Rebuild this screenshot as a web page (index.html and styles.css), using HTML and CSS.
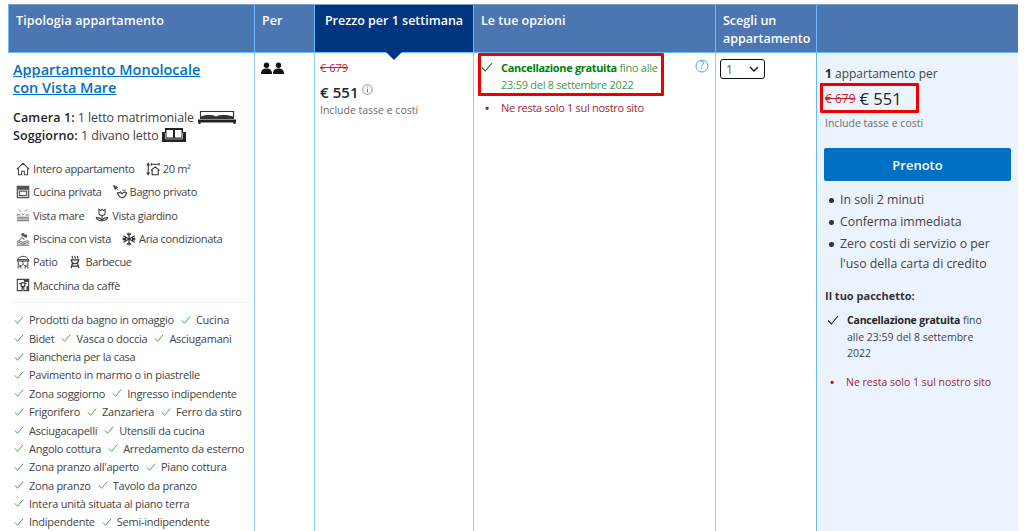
FILE: index.html
```html
<!DOCTYPE html>
<html lang="it">
<head>
<meta charset="utf-8">
<title>Appartamento Monolocale</title>
<link rel="stylesheet" href="styles.css">
</head>
<body>
<svg class="defs" width="0" height="0" aria-hidden="true">
  <symbol id="chk" viewBox="0 0 12 12"><path d="M1 6.500 4.300 10 11 2" fill="none" stroke="currentColor" stroke-width="1.100"/></symbol>
</svg>
<main class="table">
  <div class="th th-first">Tipologia appartamento</div>
  <div class="th th-per">Per</div>
  <div class="th th-price">Prezzo per 1 settimana</div>
  <div class="th">Le tue opzioni</div>
  <div class="th">Scegli un appartamento</div>
  <div class="th th-last"></div>

  <section class="td td-type">
    <a class="room-name" href="#">Appartamento Monolocale con Vista Mare</a>
    <div class="beds">
      <div><b>Camera 1:</b> 1 letto matrimoniale
        <svg class="bed" width="40" height="14" viewBox="0 0 40 14"><path d="M3.500 7V1.500h33V7" fill="none" stroke="#333" stroke-width="1.200"/><path d="M3 7c5-2.500 12-2.500 16-.5 4-2 12-2 18 .5v2H3z" fill="#333"/><path d="M1 9.500h38v3H1z" fill="#222"/><path d="M1.500 12h2v2h-2zM36.500 12h2v2h-2z" fill="#222"/></svg>
      </div>
      <div><b>Soggiorno:</b> 1 divano letto
        <svg class="sofa" width="24" height="14" viewBox="0 0 24 14"><path d="M3 0h18v4h3v10H0V4h3z" fill="#222"/><path d="M4.500 2h6.500v7.500H4.500zM13 2h6.500v7.500H13z" fill="#fff"/><path d="M2.500 5.500h1v5.500h17v-5.500h1" fill="none" stroke="#eee" stroke-width=".6"/></svg>
      </div>
    </div>
    <div class="facilities">
      <div class="f-row">
        <span class="f"><svg class="fi" viewBox="0 0 16 16"><path d="M.8 8.500 8 1.500l7.200 7M2.800 7v7.500h3.700v-4h3v4h3.700V7" fill="none" stroke="#444" stroke-width="1.200"/></svg>Intero appartamento</span>
        <span class="f"><svg class="fi" viewBox="0 0 16 16"><path d="M6 2.500h9M2.500 2v12M1 4l1.500-2.500L4 4M1 12l1.500 2.500L4 12M6 1v3M15 1v3" fill="none" stroke="#333" stroke-width="1.200"/><path d="M5.500 9.500l5-4 5 4M7 8.500v6h7v-6" fill="none" stroke="#333" stroke-width="1.200"/></svg>20 m²</span>
      </div>
      <div class="f-row">
        <span class="f"><svg class="fi" viewBox="0 0 16 16"><path d="M1.500 1.500h13v13h-13zM3.800 7h8.400v5.200H3.800z" fill="none" stroke="#555" stroke-width="1.400"/><path d="M1.500 1.500h13v4h-13z" fill="#555"/></svg>Cucina privata</span>
        <span class="f"><svg class="fi" viewBox="0 0 16 16"><path d="M.5 .5 5 2.500 2.500 5zM4 4l2 1.500" fill="#444" stroke="#444"/><path d="M5 9c1 3 2.500 5 5 5.500 3 0 5-3 5.500-6-2-.8-4 0-5 1.500C9.500 9 7.500 8.500 5 9z" fill="none" stroke="#444" stroke-width="1.300"/><path d="M8 7l1 1M11 5l1 2M14 5l-1 2" stroke="#444"/></svg>Bagno privato</span>
      </div>
      <div class="f-row">
        <span class="f"><svg class="fi" viewBox="0 0 16 16"><path d="M1 10.500h14M1 12.500h14M1 14.500h14M3.500 2l2 2M12.500 2l-2 2M6.500 6.500c1 1 2 1 3 0M1 8.500c1.500-1 3-1 4 0M11 8.500c1-1 2.500-1 4 0" fill="none" stroke="#555"/></svg>Vista mare</span>
        <span class="f"><svg class="fi" viewBox="0 0 16 16"><path d="M4.500 1.500l2 1.500L8 1.500 9.500 3l2-1.500V6c0 1.500-1.500 2.500-3.500 2.500S4.500 7.500 4.500 6zM8 8.500v6.500M1.500 11c3.500 0 5.500 1 6.500 3.500 1-2.500 3-3.500 6.500-3.500-.5 2.500-3 3.500-6.500 3.500S2 13.500 1.500 11z" fill="none" stroke="#444" stroke-width="1.200"/></svg>Vista giardino</span>
      </div>
      <div class="f-row">
        <span class="f"><svg class="fi" viewBox="0 0 16 16"><path d="M1 11c2-1 3-1 4.500 0s3 1 5 0 3-1 4.500 0M1 13c2-1 3-1 4.500 0s3 1 5 0 3-1 4.500 0M1 15h14M3.500 10 7 6l2.500 3" fill="none" stroke="#444"/><circle cx="8" cy="3" r="2" fill="#555"/><circle cx="11" cy="4.500" r="2" fill="#555"/></svg>Piscina con vista</span>
        <span class="f"><svg class="fi" viewBox="0 0 16 16"><path d="M8 .5v15M1.500 4.300l13 7.400M14.500 4.300l-13 7.400M5.500 1.500 8 4l2.500-2.500M5.500 14.500 8 12l2.500 2.500M.8 7l3.400.8-1 3.300M15.200 7l-3.400.8 1 3.300M.8 9l3.400-.8-1-3.300M15.200 9l-3.400-.8 1-3.300" fill="none" stroke="#333" stroke-width="1.300"/></svg>Aria condizionata</span>
      </div>
      <div class="f-row">
        <span class="f"><svg class="fi" viewBox="0 0 16 16"><path d="M1.500 5.500C3 3 5 1.500 8 1.500s5 1.500 6.500 4zM1.500 5.500h13v1.500h-13zM2.500 7v8.500M13.500 7v8.500M8 7v3.500M8 10.500 5.500 13v2.500M8 10.500l2.500 2.500v2.500M4 11l1.500 2h-2M12 11l-1.500 2h2" fill="none" stroke="#444" stroke-width="1.100"/></svg>Patio</span>
        <span class="f"><svg class="fi" viewBox="0 0 16 16"><path d="M5 1c-1 1 1 2 0 3M8 1c-1 1 1 2 0 3M11 1c-1 1 1 2 0 3M3 5.500h10M4 5.500c0 3 1 4.500 4 4.500s4-1.500 4-4.500M5 10l-1.500 5M11 10l1.500 5M3.500 12.800h9" fill="none" stroke="#333" stroke-width="1.400"/></svg>Barbecue</span>
      </div>
      <div class="f-row">
        <span class="f"><svg class="fi" viewBox="0 0 16 16"><path d="M1.500 1.500h13v13H9v-3.500H7v3.500H1.500zM6 5.500h4v4H6zM3.500 6.500H6M10 6.500h2" fill="none" stroke="#444" stroke-width="1.300"/><path d="M9 1.500h5.500v3H9zM12 9h2.500v5.500H12z" fill="#444"/></svg>Macchina da caffè</span>
      </div>
    </div>
    <ul class="amenities">
      <li><span class="a"><svg class="ck"><use href="#chk"/></svg>Prodotti da bagno in omaggio</span><span class="a"><svg class="ck"><use href="#chk"/></svg>Cucina</span></li>
      <li><span class="a"><svg class="ck"><use href="#chk"/></svg>Bidet</span><span class="a"><svg class="ck"><use href="#chk"/></svg>Vasca o doccia</span><span class="a"><svg class="ck"><use href="#chk"/></svg>Asciugamani</span></li>
      <li><span class="a"><svg class="ck"><use href="#chk"/></svg>Biancheria per la casa</span></li>
      <li><span class="a"><svg class="ck"><use href="#chk"/></svg>Pavimento in marmo o in piastrelle</span></li>
      <li><span class="a"><svg class="ck"><use href="#chk"/></svg>Zona soggiorno</span><span class="a"><svg class="ck"><use href="#chk"/></svg>Ingresso indipendente</span></li>
      <li><span class="a"><svg class="ck"><use href="#chk"/></svg>Frigorifero</span><span class="a"><svg class="ck"><use href="#chk"/></svg>Zanzariera</span><span class="a"><svg class="ck"><use href="#chk"/></svg>Ferro da stiro</span></li>
      <li><span class="a"><svg class="ck"><use href="#chk"/></svg>Asciugacapelli</span><span class="a"><svg class="ck"><use href="#chk"/></svg>Utensili da cucina</span></li>
      <li><span class="a"><svg class="ck"><use href="#chk"/></svg>Angolo cottura</span><span class="a"><svg class="ck"><use href="#chk"/></svg>Arredamento da esterno</span></li>
      <li><span class="a"><svg class="ck"><use href="#chk"/></svg>Zona pranzo all'aperto</span><span class="a"><svg class="ck"><use href="#chk"/></svg>Piano cottura</span></li>
      <li><span class="a"><svg class="ck"><use href="#chk"/></svg>Zona pranzo</span><span class="a"><svg class="ck"><use href="#chk"/></svg>Tavolo da pranzo</span></li>
      <li><span class="a"><svg class="ck"><use href="#chk"/></svg>Intera unità situata al piano terra</span></li>
      <li><span class="a"><svg class="ck"><use href="#chk"/></svg>Indipendente</span><span class="a"><svg class="ck"><use href="#chk"/></svg>Semi-indipendente</span></li>
    </ul>
  </section>

  <section class="td td-per">
    <svg class="people" width="24" height="13" viewBox="0 0 24 13"><circle cx="5.500" cy="3.200" r="2.700"/><path d="M0 12c0-4 2-5.500 5.500-5.500S11 8 11 12z"/><circle cx="17.500" cy="3.200" r="2.700"/><path d="M12 12c0-4 2-5.500 5.500-5.500S23 8 23 12z"/></svg>
  </section>

  <section class="td td-price">
    <div class="old">€ 679</div>
    <div class="now">€ 551<svg class="info" width="11" height="11" viewBox="0 0 11 11"><circle cx="5.500" cy="5.500" r="4.800" fill="none" stroke="#777" stroke-width=".8"/><path d="M5.500 2.500v1M5.500 4.800v3.500" stroke="#777"/></svg></div>
    <div class="tax">Include tasse e costi</div>
  </section>

  <section class="td td-options">
    <div class="cancel-box">
      <svg class="cancel-ck" width="12" height="12"><use href="#chk"/></svg>
      <p class="cancel"><b>Cancellazione gratuita</b> fino alle 23:59 del 8 settembre 2022</p>
    </div>
    <p class="left"><span class="dot">•</span>Ne resta solo 1 sul nostro sito</p>
    <svg class="help" width="14" height="14" viewBox="0 0 14 14"><circle cx="7" cy="7" r="6" fill="none" stroke="#4f9fdf"/><text x="7" y="10.300" text-anchor="middle" class="help-q">?</text></svg>
  </section>

  <section class="td td-select">
    <div class="select"><span>1</span><svg width="10" height="6" viewBox="0 0 10 6"><path d="M1 1l4 4 4-4" fill="none" stroke="#222" stroke-width="1.500"/></svg></div>
  </section>

  <aside class="td td-book">
    <p class="count"><b>1</b> appartamento per</p>
    <div class="total"><span class="total-old">€ 679</span> <span class="total-now">€ 551</span></div>
    <div class="tax tax-book">Include tasse e costi</div>
    <button class="cta" type="button">Prenoto</button>
    <ul class="perks">
      <li>In soli 2 minuti</li>
      <li>Conferma immediata</li>
      <li>Zero costi di servizio o per l'uso della carta di credito</li>
    </ul>
    <div class="pkg-title">Il tuo pacchetto:</div>
    <div class="pkg-item">
      <svg class="pkg-ck" width="12" height="12"><use href="#chk"/></svg>
      <p><b>Cancellazione gratuita</b> fino alle 23:59 del 8 settembre 2022</p>
    </div>
    <p class="left left-book"><span class="dot">•</span>Ne resta solo 1 sul nostro sito</p>
  </aside>
</main>
</body>
</html>
```
FILE: styles.css
```css
* { box-sizing: border-box; }
html, body { height: 531px; overflow: hidden; }
body {
  margin: 0;
  padding: 4px 6px 0 8px;
  background: #fff;
  color: #333;
  font-family: "Open Sans", "Noto Sans", sans-serif;
  font-size: 11px;
}
.defs { position: absolute; }
p { margin: 0; }
ul { list-style: none; margin: 0; padding: 0; }
.table {
  display: grid;
  grid-template-columns: 247px 60px 159px 242px 101px 201px;
  grid-template-rows: 49px 478px;
  width: 1010px;
}
.th {
  background: #4c76b2;
  color: #fff;
  font-size: 12.500px;
  font-weight: 600;
  line-height: 18px;
  padding: 7px 6px 0 7px;
  border-top: 1px solid #7f9dc9;
  border-right: 1px solid #6bb8fa;
  border-bottom: 1px solid #6bb8fa;
}
.th-first { border-left: 1px solid #6bb8fa; letter-spacing: .12px; }
.th-last { border-right: 0; }
.th-price {
  position: relative;
  background: #003580;
  text-align: center;
  padding: 7px 0 0;
  white-space: nowrap;
}
.th-price::after {
  content: "";
  position: absolute;
  left: 71px;
  top: 47px;
  border: 8px solid transparent;
  border-bottom-width: 0;
  border-top-color: #003580;
}
.td { border-right: 1px solid #8ccaff; overflow: hidden; }
.td-type { padding: 8px 5px 0 5px; }
.room-name {
  display: block;
  max-width: 200px;
  color: #0071c2;
  font-size: 14.500px;
  font-weight: 600;
  line-height: 18px;
}
.beds { margin-top: 12px; font-size: 12.500px; line-height: 18px; color: #444; letter-spacing: -.12px; white-space: nowrap; }
.beds b { font-weight: 600; color: #262626; letter-spacing: .1px; }
.bed, .sofa { vertical-align: -2px; }
.facilities { margin-top: 12px; padding: 0 0 5px 3px; border-bottom: 1px solid #f0f0f0; }
.f-row { display: flex; gap: 11px; height: 23.300px; align-items: center; font-size: 11px; letter-spacing: -.32px; color: #444; white-space: nowrap; }
.f { display: inline-flex; align-items: center; gap: 3px; }
.fi { width: 14px; height: 14px; flex: none; }
.amenities { padding-top: 8px; }
.amenities li { display: flex; gap: 7px; height: 18.350px; align-items: center; padding-left: 1px; color: #444; font-size: 11px; letter-spacing: -.25px; white-space: nowrap; }
.a { display: inline-flex; align-items: center; gap: 5px; }
.ck { width: 10px; height: 10px; color: #3a9e45; flex: none; }
.td-per { padding: 9px 6px; }
.people { fill: #111; display: block; }
.td-price { padding: 8px 5px; }
.old { color: #c8232c; font-size: 11px; line-height: 14px; text-decoration: line-through; }
.now { margin-top: 7px; color: #262626; font-size: 15px; font-weight: 600; line-height: 20px; letter-spacing: .1px; }
.info { vertical-align: 3px; margin-left: 3px; }
.tax { margin-top: 1px; font-size: 10.500px; color: #6b6b6b; line-height: 14px; }
.td-options { position: relative; padding: 0 4px; }
.cancel-box {
  display: flex;
  width: 186px;
  height: 43px;
  padding: 4px 0 0 0;
  gap: 8px;
  border: 3px solid #ee0000;
  border-radius: 1px;
}
.cancel-ck { color: #008009; flex: none; margin-top: 1px; }
.cancel { flex: none; width: 160px; font-size: 11px; letter-spacing: -.27px; line-height: 16.500px; color: #3f9a4c; }
.cancel b { color: #008009; font-weight: 700; letter-spacing: -.33px; }
.left { margin: 3px 0 0 0; font-size: 11px; letter-spacing: -.3px; color: #a3233b; line-height: 18px; padding-left: 7px; white-space: nowrap; }
.dot { display: inline-block; width: 16px; font-size: 11px; font-weight: 700; }
.help { position: absolute; left: 221px; top: 6px; }
.help-q { font-size: 10px; fill: #4f9fdf; font-family: "Open Sans", sans-serif; }
.td-select { padding: 6px 4px; border-right-color: #6bb8fa; }
.select {
  display: flex;
  align-items: center;
  justify-content: space-between;
  width: 45px;
  height: 20px;
  padding: 0 5px;
  border: 1.500px solid #111;
  border-radius: 3px;
  font-size: 12px;
  color: #555;
}
.td-book { background: #ebf3ff; padding: 0 7px 0 8px; border-right: 0; }
.count { margin-top: 12px; font-size: 12px; line-height: 18px; color: #444; }
.count b { color: #262626; }
.total {
  width: 99px;
  height: 30px;
  margin: 0 0 0 -5px;
  border: 3px solid #ee0000;
  border-radius: 1px;
  padding-left: 2px;
  display: flex;
  align-items: center;
  gap: 4px;
  white-space: nowrap;
}
.total-old { color: #c8232c; font-size: 12px; text-decoration: line-through; }
.total-now { color: #262626; font-size: 16.500px; font-weight: 400; }
.tax-book { margin-top: 3px; }
.cta {
  display: block;
  width: 187px;
  height: 33px;
  margin: 18px 0 0 -1px;
  background: #0071c2;
  border: 0;
  border-radius: 2px;
  color: #fff;
  font: 600 13px "Open Sans", sans-serif;
}
.perks { margin-top: 9px; font-size: 12.300px; line-height: 20px; color: #444; }
.perks li { position: relative; padding-left: 15px; margin-bottom: 2px; }
.perks li::before { content: ""; position: absolute; left: 4px; top: 8px; width: 4.500px; height: 4.500px; border-radius: 50%; background: #333; }
.pkg-title { margin-top: 14px; font-size: 11px; font-weight: 700; color: #333; line-height: 16px; }
.pkg-item { display: flex; gap: 8px; margin-top: 8px; padding-left: 2px; font-size: 10.500px; line-height: 16.500px; color: #444; }
.pkg-item p { max-width: 142px; }
.pkg-item b { color: #262626; font-weight: 700; letter-spacing: -.2px; }
.pkg-ck { color: #222; flex: none; margin-top: 2px; }
.left-book { margin-top: 11px; padding-left: 5px; font-size: 10.500px; letter-spacing: 0; }
```
